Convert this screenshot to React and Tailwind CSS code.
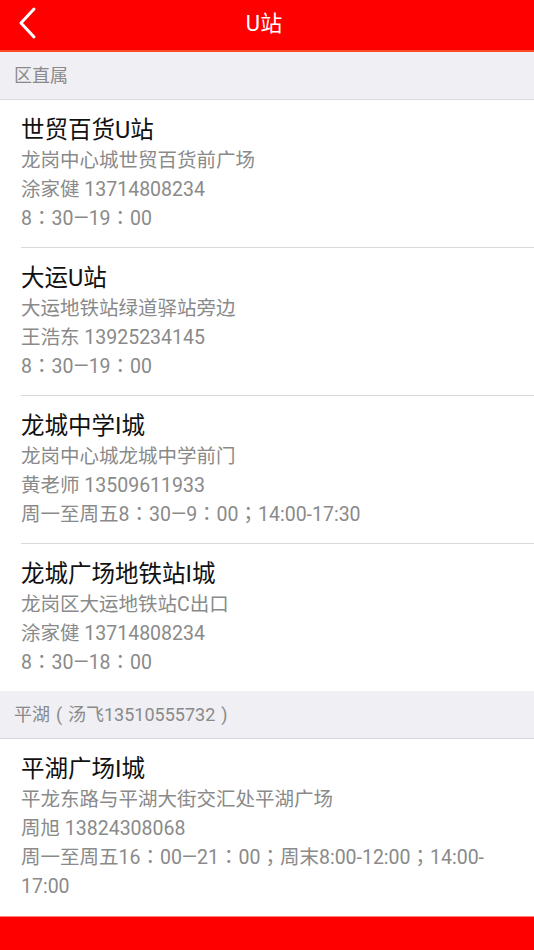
const sections = [
  {
    title: "区直属",
    items: [
      {
        name: "世贸百货U站",
        lines: ["龙岗中心城世贸百货前广场", "涂家健 13714808234", "8：30—19：00"],
      },
      {
        name: "大运U站",
        lines: ["大运地铁站绿道驿站旁边", "王浩东 13925234145", "8：30—19：00"],
      },
      {
        name: "龙城中学I城",
        lines: ["龙岗中心城龙城中学前门", "黄老师 13509611933", "周一至周五8：30—9：00；14:00-17:30"],
      },
      {
        name: "龙城广场地铁站I城",
        lines: ["龙岗区大运地铁站C出口", "涂家健 13714808234", "8：30—18：00"],
      },
    ],
  },
  {
    title: "平湖（汤飞13510555732）",
    items: [
      {
        name: "平湖广场I城",
        lines: [
          "平龙东路与平湖大街交汇处平湖广场",
          "周旭 13824308068",
          "周一至周五16：00—21：00；周末8:00-12:00；14:00-17:00",
        ],
      },
    ],
  },
];

// fullwidth colon/semicolon are drawn centred in the reference (TC glyphs)
const punct = (text) =>
  text.split(/([：；（）])/).map((part, i) => {
    if (part === "：" || part === "；")
      return (
        <span key={i} className="leading-none" style={{ fontFamily: "'Noto Sans CJK TC', sans-serif" }}>
          {part}
        </span>
      );
    if (part === "（" || part === "）")
      return (
        <span key={i} className="inline-block w-[1em] text-center leading-none">
          {part === "（" ? "(" : ")"}
        </span>
      );
    return part;
  });

export default function App() {
  return (
    <div
      className="w-[534px] h-[950px] bg-white flex flex-col overflow-hidden"
      style={{ fontFamily: "Roboto, 'Noto Sans CJK SC', sans-serif" }}
    >
      <div className="h-[52px] bg-[#ff0000] border-b-2 border-[#ff4a2a] flex items-center relative shrink-0">
        <svg
          className="absolute left-[16px] top-[6px]"
          width="24"
          height="34"
          viewBox="0 0 24 34"
          fill="none"
        >
          <path d="M18 3 L5 17 L18 31" stroke="white" strokeWidth="3" strokeLinecap="round" strokeLinejoin="round" />
        </svg>
        <div className="w-full text-center text-white text-[22px] leading-none pb-[3px] pr-[6px]">U站</div>
      </div>

      <div className="flex-1 flex flex-col">
        {sections.map((s) => (
          <div key={s.title}>
            <div className="h-[48px] bg-[#efeff4] border-b border-[#d8d8dc] flex items-center px-[14px] text-[18px] text-[#8a8a8a]">
              <div>{punct(s.title)}</div>
            </div>
            {s.items.map((it, i) => (
              <div key={it.name} className="pl-[21px]">
                <div
                  className={
                    "pt-[14px] pb-[14px] pr-[30px] " +
                    (i < s.items.length - 1 ? "border-b border-[#d9d9d9]" : "")
                  }
                >
                  <div className="text-[23.5px] leading-[32px] text-[#111]">{it.name}</div>
                  {it.lines.map((l) => (
                    <div key={l} className="text-[19.5px] leading-[29px] text-[#8a8a8a]">
                      {punct(l)}
                    </div>
                  ))}
                </div>
              </div>
            ))}
          </div>
        ))}
      </div>

      <div className="h-[34px] bg-[#ff0000] border-t border-[#ff8080] shrink-0" />
    </div>
  );
}
